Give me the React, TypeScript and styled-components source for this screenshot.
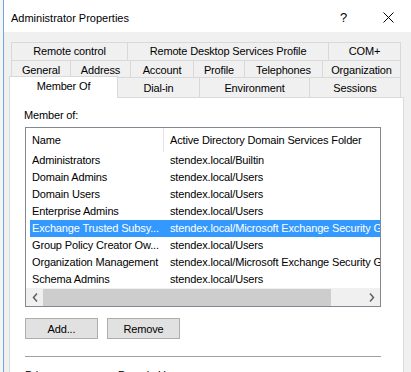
import React from "react";
import styled, { createGlobalStyle, css } from "styled-components";

const GlobalStyle = createGlobalStyle`
  html, body { margin: 0; padding: 0; }
  body {
    background: #ffffff;
    font-family: "Liberation Sans", Arial, sans-serif;
    font-size: 11px;
    color: #000000;
  }
  #root { width: 411px; height: 372px; overflow: hidden; }
  * { box-sizing: border-box; }
`;

const Screen = styled.div`
  display: flex;
  width: 411px;
  height: 372px;
  overflow: hidden;
`;

const Backdrop = styled.div`
  flex: none;
  width: 3px;
  background: #f5f5f5;
`;

const Window = styled.div`
  flex: 1;
  min-width: 0;
  display: flex;
  flex-direction: column;
  border-left: 1px solid #6fa8e0;
  background: #f0f0f0;
`;

const TitleBar = styled.div`
  flex: none;
  height: 32px;
  display: flex;
  background: #ffffff;
`;

const Title = styled.div`
  flex: 1;
  padding: 12px 0 0 7px;
  font-size: 11px;
  line-height: 13px;
  white-space: nowrap;
`;

const CaptionButton = styled.div<{ $top: number }>`
  flex: none;
  width: 45px;
  display: flex;
  justify-content: center;
  align-items: flex-start;
  padding-top: ${(p) => p.$top}px;
  font-size: 13px;
  line-height: 13px;
`;

const Body = styled.div`
  flex: 1;
  min-height: 0;
  display: flex;
  flex-direction: column;
  padding: 10px 7px 0 5px;
`;

const TabStrip = styled.div`
  flex: none;
  display: flex;
  flex-direction: column;
  margin: 0 3px 0 2px;
`;

const TabRow = styled.div<{ $height: number }>`
  display: flex;
  height: ${(p) => p.$height}px;
`;

const Tab = styled.div<{ $width: number; $lift: number; $selected?: boolean }>`
  flex: none;
  width: ${(p) => p.$width}px;
  display: flex;
  align-items: center;
  justify-content: center;
  padding-top: ${(p) => p.$lift}px;
  border-top: 1px solid #d9d9d9;
  border-left: 1px solid #d9d9d9;
  background: #f0f0f0;
  white-space: nowrap;
  line-height: 13px;
  letter-spacing: -0.15px;
  &:last-child { border-right: 1px solid #d9d9d9; }
  ${(p) =>
    p.$selected &&
    css`
      position: relative;
      z-index: 1;
      align-self: flex-start;
      height: 22px;
      margin: -1px -1px 0 -2px;
      padding-top: 0;
      padding-bottom: 3px;
      background: #ffffff;
      border-right: 1px solid #d9d9d9;
    `}
`;

const Panel = styled.div`
  flex: 1;
  display: flex;
  flex-direction: column;
  background: #ffffff;
  border: 1px solid #d9d9d9;
  border-bottom: none;
  padding-left: 15px;
`;

const SectionLabel = styled.div`
  margin: 11px 0 0 -1px;
  line-height: 13px;
  letter-spacing: -0.15px;
`;

const ListBox = styled.div`
  margin-top: 5px;
  width: 356px;
  border: 1px solid #828790;
  background: #ffffff;
  display: flex;
  flex-direction: column;
  overflow: hidden;
`;

const columns = css`
  display: grid;
  grid-template-columns: 133px minmax(0, 1fr);
  margin-left: 4px;
`;

const HeaderRow = styled.div`
  ${columns};
  height: 24px;
`;

const HeaderCell = styled.div<{ $divider?: boolean }>`
  display: flex;
  align-items: center;
  min-width: 0;
  overflow: hidden;
  white-space: nowrap;
  letter-spacing: -0.15px;
  padding-left: ${(p) => (p.$divider ? 6 : 2)}px;
  border-left: ${(p) => (p.$divider ? "1px solid #e5e5e5" : "none")};
`;

const Row = styled.div<{ $selected?: boolean }>`
  ${columns};
  height: 17px;
  background: ${(p) => (p.$selected ? "#3399ff" : "transparent")};
  color: ${(p) => (p.$selected ? "#ffffff" : "#000000")};
`;

const Cell = styled.div<{ $second?: boolean }>`
  min-width: 0;
  overflow: hidden;
  white-space: nowrap;
  line-height: 17px;
  letter-spacing: -0.15px;
  padding-left: ${(p) => (p.$second ? 7 : 2)}px;
`;

const ScrollBar = styled.div`
  height: 18px;
  display: flex;
  background: #f0f0f0;
  padding-top: 1px;
`;

const ScrollArrow = styled.div`
  flex: none;
  width: 17px;
  display: flex;
  align-items: center;
  justify-content: center;
`;

const ScrollTrack = styled.div`
  flex: 1;
  display: flex;
`;

const ScrollThumb = styled.div<{ $width: number }>`
  width: ${(p) => p.$width}px;
  background: #cdcdcd;
`;

const ButtonRow = styled.div`
  display: flex;
  gap: 9px;
  margin-top: 11px;
`;

const Button = styled.button`
  width: 73px;
  height: 21px;
  padding: 0;
  background: #e1e1e1;
  border: 1px solid #adadad;
  font-family: inherit;
  font-size: 11px;
  letter-spacing: -0.15px;
  color: #000000;
`;

const Separator = styled.div`
  width: 356px;
  height: 1px;
  margin-top: 17px;
  background: #a0a0a0;
`;

const InfoRow = styled.div`
  display: flex;
  margin-top: 12px;
  line-height: 13px;
  letter-spacing: -0.15px;
`;

const InfoLabel = styled.div`
  width: 93px;
`;

const tabRows: { height: number; lift: number; tabs: { label: string; width: number; selected?: boolean }[] }[] = [
  {
    height: 18,
    lift: 0,
    tabs: [
      { label: "Remote control", width: 116 },
      { label: "Remote Desktop Services Profile", width: 201 },
      { label: "COM+", width: 73 },
    ],
  },
  {
    height: 17,
    lift: 2,
    tabs: [
      { label: "General", width: 59 },
      { label: "Address", width: 60 },
      { label: "Account", width: 63 },
      { label: "Profile", width: 51 },
      { label: "Telephones", width: 78 },
      { label: "Organization", width: 79 },
    ],
  },
  {
    height: 20,
    lift: 1,
    tabs: [
      { label: "Member Of", width: 109, selected: true },
      { label: "Dial-in", width: 82 },
      { label: "Environment", width: 110 },
      { label: "Sessions", width: 92 },
    ],
  },
];

const groups: { name: string; folder: string; selected?: boolean }[] = [
  { name: "Administrators", folder: "stendex.local/Builtin" },
  { name: "Domain Admins", folder: "stendex.local/Users" },
  { name: "Domain Users", folder: "stendex.local/Users" },
  { name: "Enterprise Admins", folder: "stendex.local/Users" },
  { name: "Exchange Trusted Subsy...", folder: "stendex.local/Microsoft Exchange Security Groups", selected: true },
  { name: "Group Policy Creator Ow...", folder: "stendex.local/Users" },
  { name: "Organization Management", folder: "stendex.local/Microsoft Exchange Security Groups" },
  { name: "Schema Admins", folder: "stendex.local/Users" },
];

const Chevron = ({ dir }: { dir: "left" | "right" }) => (
  <svg width="6" height="9" viewBox="0 0 6 9">
    <polyline
      points={dir === "left" ? "5,0.5 1.5,4.5 5,8.5" : "1,0.5 4.5,4.5 1,8.5"}
      fill="none"
      stroke="#606060"
      strokeWidth="1.5"
    />
  </svg>
);

export default function App() {
  return (
    <>
      <GlobalStyle />
      <Screen>
        <Backdrop />
        <Window>
          <TitleBar>
            <Title>Administrator Properties</Title>
            <CaptionButton $top={11}>?</CaptionButton>
            <CaptionButton $top={12}>
              <svg width="11" height="11" viewBox="0 0 11 11">
                <path d="M0.5 0.5 L10.5 10.5 M10.5 0.5 L0.5 10.5" stroke="#000" strokeWidth="1" fill="none" />
              </svg>
            </CaptionButton>
          </TitleBar>
          <Body>
            <TabStrip>
              {tabRows.map((row, i) => (
                <TabRow key={i} $height={row.height}>
                  {row.tabs.map((t) => (
                    <Tab key={t.label} $width={t.width} $lift={row.lift} $selected={t.selected}>
                      {t.label}
                    </Tab>
                  ))}
                </TabRow>
              ))}
            </TabStrip>
            <Panel>
              <SectionLabel>Member of:</SectionLabel>
              <ListBox>
                <HeaderRow>
                  <HeaderCell>Name</HeaderCell>
                  <HeaderCell $divider>Active Directory Domain Services Folder</HeaderCell>
                </HeaderRow>
                {groups.map((g) => (
                  <Row key={g.name} $selected={g.selected}>
                    <Cell>{g.name}</Cell>
                    <Cell $second>{g.folder}</Cell>
                  </Row>
                ))}
                <ScrollBar>
                  <ScrollArrow>
                    <Chevron dir="left" />
                  </ScrollArrow>
                  <ScrollTrack>
                    <ScrollThumb $width={288} />
                  </ScrollTrack>
                  <ScrollArrow>
                    <Chevron dir="right" />
                  </ScrollArrow>
                </ScrollBar>
              </ListBox>
              <ButtonRow>
                <Button>Add...</Button>
                <Button>Remove</Button>
              </ButtonRow>
              <Separator />
              <InfoRow>
                <InfoLabel>Primary group:</InfoLabel>
                <div>Domain Users</div>
              </InfoRow>
            </Panel>
          </Body>
        </Window>
      </Screen>
    </>
  );
}
